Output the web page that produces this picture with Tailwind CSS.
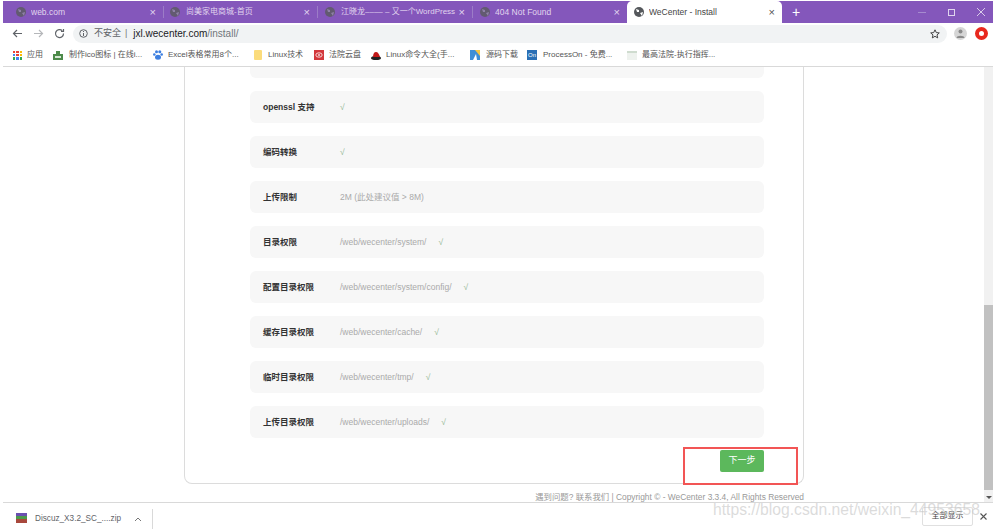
<!DOCTYPE html>
<html lang="zh-CN">
<head>
<meta charset="utf-8">
<title>WeCenter - Install</title>
<script src="https://cdn.jsdelivr.net/npm/@tailwindcss/browser@4"></script>
</head>
<body class="bg-white">
<div class="relative h-[529px] w-[993px] overflow-hidden bg-white pl-[3px] font-['Liberation_Sans','Noto_Sans_CJK_SC',sans-serif]">

  <!-- tab strip -->
  <div class="mt-px flex h-[22px] items-stretch bg-[#8457bb] text-[8.5px] text-[#e0d5ee]">
    <div class="flex w-[160px] items-center pl-[13px] pr-[7px]">
      <svg class="h-[10px] w-[10px] shrink-0" viewBox="0 0 10 10"><circle cx="5" cy="5" r="5" fill="#625a70"/><path d="M2 2l3 1 0 2-2 0zM6 6l3-1-1 4z" fill="#8f80a8"/></svg>
      <span class="ml-[5px] flex-1 truncate">web.com</span>
      <span class="text-[11px] leading-none">×</span>
    </div>
    <div class="my-[5px] w-px bg-[#9c7cc7]"></div>
    <div class="flex w-[153px] items-center pl-[6px] pr-[7px]">
      <svg class="h-[10px] w-[10px] shrink-0" viewBox="0 0 10 10"><circle cx="5" cy="5" r="5" fill="#625a70"/><path d="M2 2l3 1 0 2-2 0zM6 6l3-1-1 4z" fill="#8f80a8"/></svg>
      <span class="ml-[6px] flex-1 truncate text-[8px]">尚美家电商城-首页</span>
      <span class="text-[11px] leading-none">×</span>
    </div>
    <div class="my-[5px] w-px bg-[#9c7cc7]"></div>
    <div class="flex w-[154px] items-center pl-[7px] pr-[7px]">
      <svg class="h-[10px] w-[10px] shrink-0" viewBox="0 0 10 10"><circle cx="5" cy="5" r="5" fill="#625a70"/><path d="M2 2l3 1 0 2-2 0zM6 6l3-1-1 4z" fill="#8f80a8"/></svg>
      <span class="ml-[6px] w-[115px] whitespace-nowrap text-[8px]">江晓龙–––– – 又一个WordPress</span>
      <span class="ml-auto text-[11px] leading-none">×</span>
    </div>
    <div class="my-[5px] w-px bg-[#9c7cc7]"></div>
    <div class="flex w-[154px] items-center pl-[7px] pr-[7px]">
      <svg class="h-[10px] w-[10px] shrink-0" viewBox="0 0 10 10"><circle cx="5" cy="5" r="5" fill="#625a70"/><path d="M2 2l3 1 0 2-2 0zM6 6l3-1-1 4z" fill="#8f80a8"/></svg>
      <span class="ml-[5px] flex-1 truncate">404 Not Found</span>
      <span class="text-[11px] leading-none">×</span>
    </div>
    <div class="flex w-[155px] items-center rounded-t-[5px] bg-white pl-[7px] pr-[7px] text-[#444]">
      <svg class="h-[10px] w-[10px] shrink-0" viewBox="0 0 10 10"><circle cx="5" cy="5" r="5" fill="#55585c"/><path d="M2 2l3 1 0 2-2 0zM6 6l3-1-1 4z" fill="#fff"/></svg>
      <span class="ml-[5px] flex-1 truncate">WeCenter - Install</span>
      <span class="text-[11px] leading-none text-[#555]">×</span>
    </div>
    <span class="ml-[10px] self-center text-[14px] leading-none text-white">+</span>
    <div class="ml-auto flex w-[75px] items-center">
      <span class="h-px w-[8px] bg-[#a68bcf]"></span>
      <span class="ml-[22px] h-[7px] w-[7px] border border-[#e0d5ee]"></span>
      <svg class="ml-[22px] h-[8px] w-[8px]" viewBox="0 0 8 8"><path d="M0 0l8 8M8 0L0 8" stroke="#d9cbe9" stroke-width="1"/></svg>
    </div>
  </div>

  <!-- address bar -->
  <div class="flex h-[21px] items-center bg-white text-[#5f6368]">
    <svg class="ml-[9px] h-[11px] w-[11px]" viewBox="0 0 11 11" fill="none" stroke="#5f6368" stroke-width="1.2"><path d="M10 5.500H1.500M5 2L1.500 5.500 5 9"/></svg>
    <svg class="ml-[10px] h-[11px] w-[11px]" viewBox="0 0 11 11" fill="none" stroke="#b5b7ba" stroke-width="1.2"><path d="M1 5.500H9.500M6 2l3.500 3.500L6 9"/></svg>
    <svg class="ml-[10px] h-[11px] w-[11px]" viewBox="0 0 11 11" fill="none" stroke="#5f6368" stroke-width="1.2"><path d="M9.500 5.500a4 4 0 1 1-1.200-2.800"/><path d="M9.500 1v2.500H7"/></svg>
    <div class="ml-[8px] flex h-[18px] w-[874px] items-center rounded-full bg-[#f1f3f4] pl-[6px] pr-[7px] text-[9px]">
      <svg class="h-[9px] w-[9px]" viewBox="0 0 9 9" fill="none" stroke="#5f6368"><circle cx="4.500" cy="4.500" r="3.800"/><path d="M4.500 4v3M4.500 2v1"/></svg>
      <span class="ml-[6px] text-[#5f6368]">不安全</span>
      <span class="ml-[4px] text-[#777]">|</span>
      <span class="ml-[6px] text-[10px] text-[#202124]">jxl.wecenter.com<span class="text-[#70757a]">/install/</span></span>
      <svg class="ml-auto h-[10px] w-[10px]" viewBox="0 0 10 10" fill="none" stroke="#444"><path d="M5 .8l1.300 2.800 3 .3-2.300 2 .7 3L5 7.300 2.300 8.900l.7-3-2.300-2 3-.3z"/></svg>
    </div>
    <span class="ml-[7px] flex h-[13px] w-[13px] items-center justify-center rounded-full bg-[#d6d6d6]">
      <svg class="h-[9px] w-[9px]" viewBox="0 0 9 9" fill="#8a8a8a"><circle cx="4.500" cy="2.500" r="2"/><path d="M.5 9c0-3 8-3 8 0z"/></svg>
    </span>
    <span class="ml-[8px] flex h-[13px] w-[13px] items-center justify-center rounded-full bg-[#e8281e]">
      <span class="h-[5px] w-[5px] rounded-full bg-white"></span>
    </span>
  </div>

  <!-- bookmarks -->
  <div class="flex h-[23px] items-center border-b border-[#d9d9d9] text-[8px] text-[#555]">
    <span class="ml-[10px] grid h-[9px] w-[9px] grid-cols-3 gap-px">
      <i class="bg-[#ea4335]"></i><i class="bg-[#ea4335]"></i><i class="bg-[#fbbc05]"></i>
      <i class="bg-[#4285f4]"></i><i class="bg-[#ea4335]"></i><i class="bg-[#fbbc05]"></i>
      <i class="bg-[#34a853]"></i><i class="bg-[#4285f4]"></i><i class="bg-[#34a853]"></i>
    </span>
    <span class="ml-[5px] w-[26px]">应用</span>
    <svg class="h-[9px] w-[10px]" viewBox="0 0 10 9"><path d="M3 0h4v3h3v6H0V3h3z" fill="#4d8a4a"/><rect x="2" y="5" width="6" height="2" fill="#d7e7d5"/></svg>
    <span class="ml-[6px] w-[84px] whitespace-nowrap">制作ico图标 | 在线i...</span>
    <svg class="h-[10px] w-[10px]" viewBox="0 0 10 10" fill="#3d7fe0"><circle cx="3.500" cy="1.800" r="1.500"/><circle cx="6.800" cy="1.800" r="1.500"/><circle cx="1.300" cy="4.500" r="1.300"/><circle cx="8.700" cy="4.500" r="1.300"/><ellipse cx="5" cy="7.200" rx="3" ry="2.500"/></svg>
    <span class="ml-[5px] w-[86px] whitespace-nowrap">Excel表格常用8个...</span>
    <span class="h-[10px] w-[8px] rounded-[1px] bg-[#fbdc7c]"></span>
    <span class="ml-[6px] w-[46px] whitespace-nowrap">Linux技术</span>
    <svg class="h-[10px] w-[10px]" viewBox="0 0 10 10"><rect width="10" height="10" fill="#d3383c"/><ellipse cx="5" cy="5" rx="3.200" ry="2.200" fill="none" stroke="#f5d6d6"/><circle cx="5" cy="5" r="1" fill="#f5d6d6"/></svg>
    <span class="ml-[5px] w-[42px] whitespace-nowrap">法院云盘</span>
    <svg class="h-[9px] w-[10px]" viewBox="0 0 10 9"><ellipse cx="5" cy="7" rx="5" ry="2" fill="#222"/><path d="M2 6c0-3 1-5 3-5s3 2 4 5z" fill="#c01818"/></svg>
    <span class="ml-[5px] w-[84px] whitespace-nowrap">Linux命令大全(手...</span>
    <svg class="h-[10px] w-[10px]" viewBox="0 0 10 10"><rect width="10" height="10" fill="#3d8fd6"/><path d="M5 0h5v6z" fill="#f4c542"/><path d="M3 10l3-6 1 6z" fill="#fff"/></svg>
    <span class="ml-[6px] w-[41px] whitespace-nowrap">源码下载</span>
    <span class="h-[10px] w-[10px] bg-[#2a6fb5] text-center text-[6px] leading-[10px] text-white">On</span>
    <span class="ml-[6px] w-[84px] whitespace-nowrap">ProcessOn - 免费...</span>
    <span class="h-[9px] w-[10px] border-t-2 border-[#cfdccf] bg-[#eef2ee]"></span>
    <span class="ml-[5px] whitespace-nowrap">最高法院-执行指挥...</span>
  </div>

  <!-- page -->
  <div class="flex h-[436px] border-b border-[#d9d9d9]">
    <div class="h-full w-[981px] shrink-0 overflow-hidden pl-[181px]">
      <div class="h-[417px] w-[620px] rounded-b-[8px] border-x border-b border-[#dcdcdc] pl-[65px] pr-[39px] pt-[24px]">
        <div class="-mt-[45px] flex flex-col gap-[13px]">
          <div class="h-[32px] rounded-[6px] bg-[#f7f7f7]"></div>
          <div class="flex h-[32px] items-center rounded-[6px] bg-[#f7f7f7] pl-[13px] text-[8.5px] text-[#aaa]">
            <span class="w-[77px] font-bold text-[#333]">openssl 支持</span><span class="text-[#8fb48f]">√</span>
          </div>
          <div class="flex h-[32px] items-center rounded-[6px] bg-[#f7f7f7] pl-[13px] text-[8.5px] text-[#aaa]">
            <span class="w-[77px] font-bold text-[#333]">编码转换</span><span class="text-[#8fb48f]">√</span>
          </div>
          <div class="flex h-[32px] items-center rounded-[6px] bg-[#f7f7f7] pl-[13px] text-[8.5px] text-[#aaa]">
            <span class="w-[77px] font-bold text-[#333]">上传限制</span><span>2M (此处建议值 &gt; 8M)</span>
          </div>
          <div class="flex h-[32px] items-center rounded-[6px] bg-[#f7f7f7] pl-[13px] text-[8.5px] text-[#aaa]">
            <span class="w-[77px] font-bold text-[#333]">目录权限</span><span>/web/wecenter/system/</span><span class="ml-[12px] text-[#8fb48f]">√</span>
          </div>
          <div class="flex h-[32px] items-center rounded-[6px] bg-[#f7f7f7] pl-[13px] text-[8.5px] text-[#aaa]">
            <span class="w-[77px] font-bold text-[#333]">配置目录权限</span><span>/web/wecenter/system/config/</span><span class="ml-[12px] text-[#8fb48f]">√</span>
          </div>
          <div class="flex h-[32px] items-center rounded-[6px] bg-[#f7f7f7] pl-[13px] text-[8.5px] text-[#aaa]">
            <span class="w-[77px] font-bold text-[#333]">缓存目录权限</span><span>/web/wecenter/cache/</span><span class="ml-[12px] text-[#8fb48f]">√</span>
          </div>
          <div class="flex h-[32px] items-center rounded-[6px] bg-[#f7f7f7] pl-[13px] text-[8.5px] text-[#aaa]">
            <span class="w-[77px] font-bold text-[#333]">临时目录权限</span><span>/web/wecenter/tmp/</span><span class="ml-[12px] text-[#8fb48f]">√</span>
          </div>
          <div class="flex h-[32px] items-center rounded-[6px] bg-[#f7f7f7] pl-[13px] text-[8.5px] text-[#aaa]">
            <span class="w-[77px] font-bold text-[#333]">上传目录权限</span><span>/web/wecenter/uploads/</span><span class="ml-[12px] text-[#8fb48f]">√</span>
          </div>
        </div>
        <div class="mt-[12px] flex justify-end">
          <button class="h-[22px] w-[44px] rounded-[2px] bg-[#5cb85c] text-[9px] text-white">下一步</button>
        </div>
      </div>
      <p class="mt-[7px] w-[620px] text-right text-[8.4px] text-[#999]">遇到问题? 联系我们 | Copyright © - WeCenter 3.3.4, All Rights Reserved</p>
    </div>
    <!-- scrollbar -->
    <div class="flex h-full w-[9px] flex-col bg-[#f1f1f1]">
      <div class="mt-[238px] h-[185px] bg-[#c1c1c1]"></div>
      <div class="mt-auto mb-[3px] self-center border-x-[3px] border-t-[3px] border-x-transparent border-t-[#555]"></div>
    </div>
  </div>

  <!-- download shelf -->
  <div class="flex h-[26px] items-center text-[8.2px] text-[#5f6368]">
    <div class="flex h-full items-center pt-[7px]">
      <svg class="-mt-[4px] ml-[13px] h-[10px] w-[11px]" viewBox="0 0 11 10"><rect width="11" height="3" fill="#6a4fb0"/><rect y="3" width="11" height="3" fill="#4d9a4a"/><rect y="6" width="11" height="4" fill="#a8483c"/></svg>
      <span class="ml-[8px] w-[90px] whitespace-nowrap">Discuz_X3.2_SC_....zip</span>
      <svg class="-mt-[2px] ml-[9px] h-[6px] w-[8px]" viewBox="0 0 8 6" fill="none" stroke="#777"><path d="M1 5l3-3 3 3"/></svg>
      <span class="ml-[10px] h-[22px] w-px bg-[#d9d9d9]"></span>
    </div>
    <span class="ml-auto mr-[7px] flex h-[19px] w-[51px] items-center justify-center rounded-[2px] border border-[#e0e0e0] text-[8px] text-[#444]">全部显示</span>
    <svg class="mr-[6px] h-[7px] w-[7px]" viewBox="0 0 7 7"><path d="M.5.5l6 6M6.500.5l-6 6" stroke="#555" stroke-width="1.100"/></svg>
  </div>

  <!-- red annotation box -->
  <div class="absolute left-[683px] top-[447px] h-[38px] w-[115px] border-2 border-[#f25555]"></div>
  <!-- csdn watermark -->
  <div class="absolute left-[713px] top-[500px] text-[15.7px] leading-[20px] whitespace-nowrap text-[#c4c4c4]/60">https://blog.csdn.net/weixin_44953658</div>
</div>
</body>
</html>
